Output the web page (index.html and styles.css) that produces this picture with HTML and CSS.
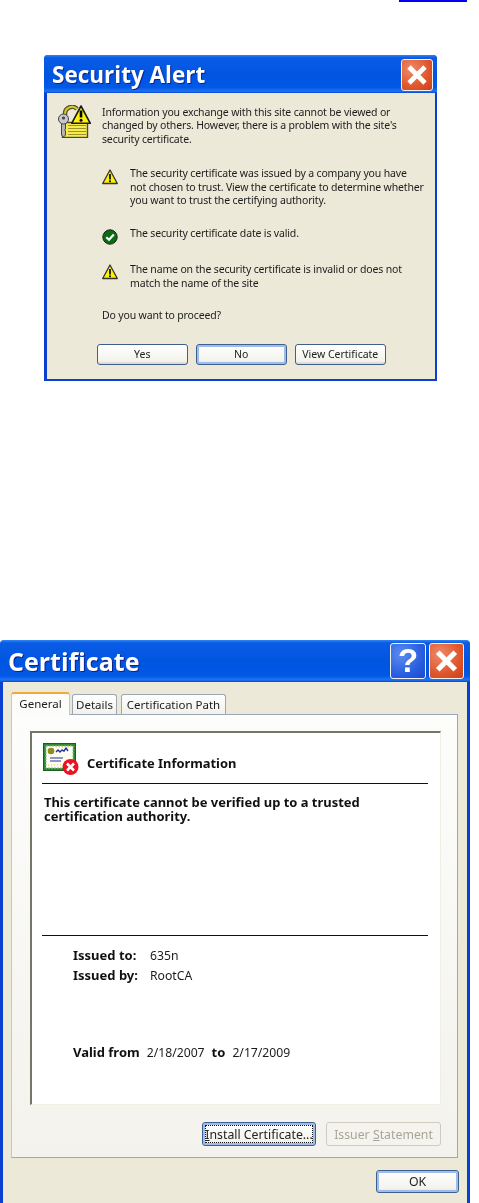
FILE: index.html
```html
<!DOCTYPE html>
<html lang="en">
<head>
<meta charset="utf-8">
<title>Security Alert</title>
<link rel="stylesheet" href="styles.css">
</head>
<body>
<div class="link-stub"></div>

<section class="window alert">
  <header class="titlebar">
    <h1 class="title">Security Alert</h1>
    <span class="cap close"><svg viewBox="0 0 32 32"><path d="M7.5 7.5 24.500 24.500M24.500 7.500 7.500 24.500" class="xstroke"/></svg></span>
  </header>
  <div class="client alert-client">
    <div class="intro">
      <svg class="lock" viewBox="0 0 33 33">
        <path d="M7 18V9a7 7 0 0 1 12-5" fill="none" stroke="#55551a" stroke-width="4.500"/>
        <path d="M7 18V9a7 7 0 0 1 12-5" fill="none" stroke="#d4c83c" stroke-width="2"/>
        <rect x="4.500" y="17.500" width="25" height="15" fill="#f6ea50" stroke="#4a4a18" stroke-width="1.400"/>
        <path d="M10 20.500h18M10 23.500h18M10 26.500h18M10 29.500h18" stroke="#9a9428"/>
        <path d="M3.500 16v14l2 2 2-2v-4l-1-1 1-1v-8z" fill="#b4b4b4" stroke="#444"/>
        <circle cx="5.500" cy="14" r="5" fill="#c8c8cc" stroke="#444"/>
        <circle cx="5.500" cy="13" r="1.600" fill="#444"/>
        <path d="M23 1 32.300 18.300H13.700Z" fill="#fff200" stroke="#1a1a1a" stroke-linejoin="round" stroke-width="1.600"/>
        <path d="M23 5.500v7" stroke="#000" stroke-width="2.600"/>
        <circle cx="23" cy="15.200" r="1.500"/>
      </svg>
      <p class="txt">Information you exchange with this site cannot be viewed or<br>changed by others. However, there is a problem with the site's<br>security certificate.</p>
    </div>
    <div class="item first">
      <svg class="state" viewBox="0 0 16 16"><use href="#warn"/></svg>
      <p class="txt">The security certificate was issued by a company you have<br>not chosen to trust. View the certificate to determine whether<br>you want to trust the certifying authority.</p>
    </div>
    <div class="item second">
      <svg class="state" viewBox="0 0 16 16">
        <circle cx="8" cy="8" r="7.200" fill="#0a6b12" stroke="#222" stroke-width="1"/>
        <path d="M4.300 8.300 7 10.800 11.800 5.600" fill="none" stroke="#fff" stroke-width="2.200"/>
      </svg>
      <p class="txt">The security certificate date is valid.</p>
    </div>
    <div class="item third">
      <svg class="state" viewBox="0 0 16 16"><use href="#warn"/></svg>
      <p class="txt">The name on the security certificate is invalid or does not<br>match the name of the site</p>
    </div>
    <p class="txt question">Do you want to proceed?</p>
    <div class="alert-buttons">
      <span class="btn wide">Yes</span>
      <span class="btn wide default">No</span>
      <span class="btn wide">View Certificate</span>
    </div>
  </div>
</section>

<section class="window cert">
  <header class="titlebar tall">
    <h1 class="title">Certificate</h1>
    <span class="cap help">?</span>
    <span class="cap close large"><svg viewBox="0 0 32 32"><path d="M7.5 7.5 24.500 24.500M24.500 7.500 7.500 24.500" class="xstroke"/></svg></span>
  </header>
  <div class="client cert-client">
    <nav class="tabs">
      <span class="tab active">General</span>
      <span class="tab t-details">Details</span>
      <span class="tab t-path">Certification Path</span>
    </nav>
    <div class="panel">
      <div class="infobox">
        <div class="info-head">
          <svg class="certicon" viewBox="0 0 37 32">
            <rect x="1.500" y="0.500" width="32" height="27" fill="#2f8a35" stroke="#1c5c22"/>
            <rect x="4" y="3" width="27" height="22" fill="#fffdf0" stroke="#8fbf8f" stroke-dasharray="2 1"/>
            <circle cx="9" cy="8" r="3.300" fill="#8c8c20"/>
            <path d="M14 9l2-2 2 2 2-2 2 1 2-3 2 3" fill="none" stroke="#2030a0" stroke-width="1.400"/>
            <path d="M8 15h13M8 18h11" stroke="#2030a0" stroke-width="1.200"/>
            <path d="M14 4h15M6 22h18" stroke="#e0cf30" stroke-dasharray="1 2"/>
            <circle cx="28.500" cy="24" r="8" fill="#ee1122"/>
            <path d="M25 20.500 32 27.500M32 20.500 25 27.500" stroke="#fff" stroke-width="2.600"/>
          </svg>
          <h2 class="info-title">Certificate Information</h2>
        </div>
        <p class="bold-msg">This certificate cannot be verified up to a trusted<br>certification authority.</p>
        <dl class="facts">
          <div class="fact"><dt>Issued to:</dt><dd>635n</dd></div>
          <div class="fact"><dt>Issued by:</dt><dd>RootCA</dd></div>
          <div class="fact valid"><dt>Valid from</dt><dd>2/18/2007</dd><dt>to</dt><dd>2/17/2009</dd></div>
        </dl>
      </div>
      <div class="panel-buttons">
        <span class="btn install"><span class="focus"><span><u>I</u>nstall Certificate...</span></span></span>
        <span class="btn issuer"><span>Issuer <u>S</u>tatement</span></span>
      </div>
    </div>
    <div class="ok-row"><span class="btn ok default">OK</span></div>
  </div>
</section>

<svg class="defs" width="0" height="0">
  <defs>
    <g id="warn">
      <path d="M8 1 15.300 14.500H0.700Z" fill="#fff200" stroke="#333" stroke-width="1.300" stroke-linejoin="round"/>
      <path d="M8 5v5.500" stroke="#111" stroke-width="1.800"/>
      <circle cx="8" cy="12.300" r="1"/>
    </g>
  </defs>
</svg>
</body>
</html>
```

FILE: styles.css
```css
* { box-sizing: border-box; }
html, body { margin: 0; padding: 0; background: #fff; }
body { width: 479px; height: 1203px; overflow: hidden; font-family: "Noto Sans", "Open Sans", sans-serif; color: #1c1c1c; }
h1, h2, p, dl, dd, dt { margin: 0; padding: 0; font-size: inherit; font-weight: inherit; }
.defs { position: absolute; }

.link-stub { width: 68px; height: 2px; margin-left: 399px; background: #0000f0; }

.window { display: flex; flex-direction: column; filter: blur(0.35px); }
.alert { width: 393px; height: 326px; margin: 53px 0 0 44px; border-radius: 4px 4px 0 0; background: #0a3fd0; }
.cert { width: 470px; height: 563px; margin: 259px 0 0 0; border-radius: 5px 5px 0 0; background: #0a3fd0; }

.titlebar { display: flex; align-items: center; height: 38px; padding: 2px 4px 0 8px; flex: none; border-radius: 4px 4px 0 0;
  background: linear-gradient(#2f86f2 0, #0a5ce6 7%, #0055e0 50%, #0058e6 85%, #1f74f2 95%, #0a48d0 100%); }
.titlebar.tall { height: 42px; padding: 0 6px 0 8px; }
.title { flex: 1; font-family: "Open Sans", sans-serif; font-weight: 700; font-size: 22.500px; line-height: 28px; color: #fff; text-shadow: 1px 1px 0 #10208c; }
.tall .title { font-size: 25px; }

.cap { display: flex; align-items: center; justify-content: center; width: 32px; height: 32px; border: 1px solid #f2f2f2; border-radius: 3px; }
.cap svg { width: 100%; height: 100%; display: block; }
.xstroke { stroke: #fff; stroke-width: 5; fill: none; }
.close { background: radial-gradient(circle at 30% 30%, #ee8a68, #e0562c 60%, #c8401a); }
.close.large { width: 35px; height: 36px; margin-left: 3px; }
.help { width: 36px; height: 36px; color: #fff; font-family: "Liberation Sans", sans-serif; font-weight: 700; font-size: 33px; line-height: 36px; background: radial-gradient(circle at 30% 30%, #5c8cf0, #2a5fe0 60%, #1c48c8); }

.client { flex: 1; margin: 0 2px 2px 3px; background: #ece9d8; }
.txt { font-size: 10.500px; letter-spacing: -0.160px; line-height: 13.400px; white-space: nowrap; }

.alert-client { padding: 13px 0 0 14px; }
.intro { display: flex; }
.lock { width: 33px; height: 33px; flex: none; margin: -1px 0 0 -3px; display: block; }
.intro .txt { margin-left: 11px; }
.item { display: flex; align-items: flex-start; margin-left: 41px; }
.item .txt { margin-left: 12px; }
.first { margin-top: 21px; }
.second { margin-top: 20px; }
.third { margin-top: 18px; }
.state { width: 16px; height: 16px; flex: none; margin-top: 2px; display: block; }
.third .state { margin-top: 1px; }
.question { margin: 19px 0 0 41px; }

.alert-buttons { display: flex; gap: 8.500px; margin: 21px 0 0 36px; }
.btn { display: flex; align-items: center; justify-content: center; font-size: 10.500px; line-height: 13px; white-space: nowrap; color: #222; border: 1px solid #3f5f8c; border-radius: 3px; background: linear-gradient(#fff, #f3f2ec 85%, #d6d0c5); }
.wide { width: 90.500px; height: 21px; }
.default { box-shadow: inset 0 0 0 2px #a0bcea; }

.cert-client { display: flex; flex-direction: column; padding: 7px 8px 0 8px; margin: 0 3px 0 3px; }
.tabs { display: flex; align-items: flex-end; height: 25px; gap: 2px; }
.tab { display: flex; align-items: center; justify-content: center; height: 20px; font-size: 11.500px; border: 1px solid #9ba7b7; border-bottom: 0; border-radius: 3px 3px 0 0; background: linear-gradient(#fff, #f2f1ea); }
.tab.active { width: 59px; height: 23px; padding-bottom: 3px; margin-bottom: -1px; border-color: #c8c8bc; border-top: 2px solid #f2a93a; background: #fcfcfa; position: relative; z-index: 1; }
.t-details { width: 45px; margin-right: 2px; }
.t-path { width: 105px; }

.panel { height: 444px; margin-right: 1px; padding: 16px 16px 0 18px; border: 1px solid #9ba7b7; border-left-color: #c8c8bc; background: linear-gradient(#fdfdfc, #f3f2ec); }
.infobox { height: 374px; padding: 10px 12px 0 10px; background: #fff; border-style: solid; border-width: 2px 1px 1px 2px; border-color: #77756a #f0efe4 #f0efe4 #77756a; }
.info-head { display: flex; align-items: flex-start; height: 41px; border-bottom: 1px solid #111; }
.certicon { width: 37px; height: 32px; flex: none; display: block; }
.info-title { margin: 12px 0 0 8px; font-size: 12.900px; line-height: 16px; font-weight: 700; color: #111; }
.bold-msg { margin: 11px 0 0 2px; height: 140px; font-size: 12.950px; line-height: 14px; font-weight: 700; color: #111; }
.facts { height: 140px; padding: 9px 0 0 31px; border-top: 1px solid #111; }
.fact { display: flex; height: 20px; align-items: center; font-size: 12.200px; }
.fact dt { width: 77px; font-weight: 700; font-size: 13px; color: #111; }
.valid { margin-top: 57px; }
.valid dt { width: auto; margin-right: 7px; }
.valid dd { margin-right: 7px; }

.panel-buttons { display: flex; justify-content: flex-end; gap: 10px; margin-top: 17px; }
.panel-buttons .btn, .ok { font-size: 12.300px; }
.install { width: 114px; height: 24px; padding: 2px; box-shadow: inset 0 0 0 2px #a0bcea; }
.focus { display: flex; align-items: center; justify-content: center; width: 100%; height: 100%; border: 1px dotted #111; }
.issuer { width: 115px; height: 24px; color: #a8a598; border-color: #cfccbd; background: #f4f3ee; }
.ok-row { display: flex; justify-content: flex-end; margin-top: 12px; }
.ok { width: 83px; height: 23px; }
```
